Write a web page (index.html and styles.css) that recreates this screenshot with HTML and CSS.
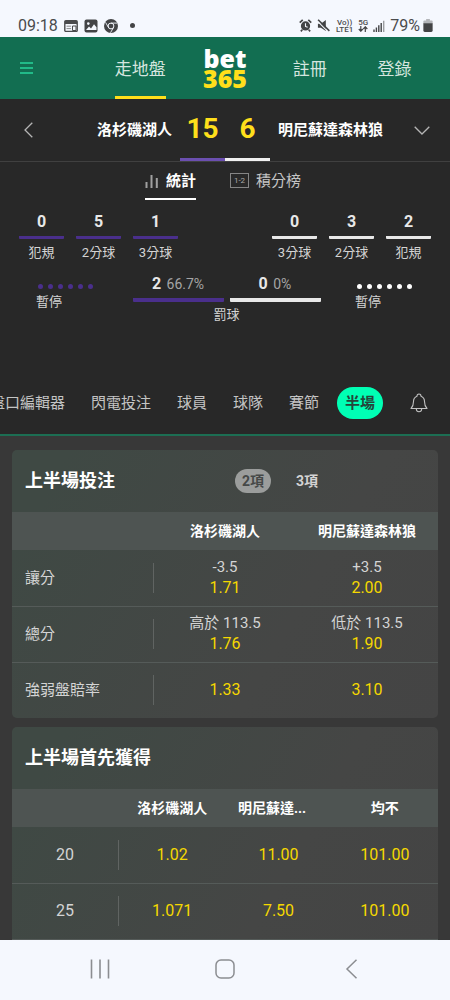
FILE: index.html
```html
<!DOCTYPE html>
<html lang="zh-Hant">
<head>
<meta charset="utf-8">
<meta name="viewport" content="width=device-width, initial-scale=1">
<title>bet365</title>
<link rel="stylesheet" href="styles.css">
</head>
<body>
<div class="screen">
  <div class="status">
    <span class="status-time">09:18</span>
    <svg class="i-news" viewBox="0 0 14 12"><rect x=".8" y=".8" width="12.4" height="10.6" rx="1" fill="none" stroke="#4a4b4d" stroke-width="1.4"/><path d="M1 1h12v3H1z" fill="#4a4b4d"/><path d="M2.500 6.200h4.600M2.500 8.600h4.600" stroke="#8b8c8e" stroke-width="1"/><path d="M8.500 6h3.500v4.500H8.500z" fill="none" stroke="#4a4b4d"/></svg>
    <svg class="i-pic" viewBox="0 0 14 14"><rect x=".5" y=".5" width="13" height="13" rx="2" fill="#434446"/><circle cx="4.300" cy="4.600" r="1.300" fill="#f5f8fe"/><path d="M2 11l3-3.600 2 2 3-4.200 2.500 3V11z" fill="#f5f8fe"/></svg>
    <svg class="i-pic" viewBox="0 0 14 14"><circle cx="7" cy="7" r="7" fill="#434446"/><circle cx="7" cy="7" r="2.900" fill="#434446" stroke="#f5f8fe" stroke-width="1"/><path d="M7 4.100h6.200M4.500 8.500L1.500 3.300M9.500 8.500L6.500 13.700" stroke="#f5f8fe" stroke-width=".9"/></svg>
    <span class="status-dot"></span>
    <div class="status-right">
      <svg class="i-alarm" viewBox="0 0 14 14"><circle cx="7" cy="7.500" r="5" fill="#434446"/><path d="M.8 4L4 1M13.200 4L10 1M3.500 11.500L2 13.300M10.500 11.500L12 13.300" stroke="#434446" stroke-width="1.800"/><path d="M7 4.500V8l2.300 1" fill="none" stroke="#f5f8fe" stroke-width="1.200"/></svg>
      <svg class="i-mute" viewBox="0 0 14 14"><path d="M1 5h3.200L9.500 1v12L4.200 9.500H1z" fill="#434446"/><path d="M0 1.800L12 13.800" stroke="#f5f8fe" stroke-width="1.200"/><path d="M1.200 .8L13.300 12.800" stroke="#434446" stroke-width="1.700"/></svg>
      <span class="net"><span>Vo))</span><span>LTE1</span></span>
      <span class="net"><span>5G</span><svg viewBox="0 0 10 6"><path d="M2.800 0v5M.8 3l2 2.200L4.800 3M7.300 6V1M5.300 3l2-2.200L9.300 3" fill="none" stroke="#434446" stroke-width="1.200"/></svg></span>
      <svg class="i-signal" viewBox="0 0 12 12"><path d="M1 12V9.500M3.400 12V7.500M5.800 12V5.300M8.200 12V3" stroke="#434446" stroke-width="1.400"/><path d="M10.700 12V.8" stroke="#9b9da1" stroke-width="1.400"/></svg>
      <span class="battery-text">79%</span>
      <svg class="i-batt" viewBox="0 0 10 14"><path d="M3 0h4v1.500h2q1 0 1 1V5H0V2.500q0-1 1-1h2z" fill="#b4b6ba"/><path d="M0 4.500h10V12.500q0 1.500-1.500 1.500h-7Q0 14 0 12.500z" fill="#434446"/></svg>
    </div>
  </div>

  <header class="topbar">
    <button class="menu" aria-label="選單"><svg viewBox="0 0 14 14"><path d="M0 2h13M0 7h13M0 12h13" stroke="#27d49a" stroke-width="1.600"/></svg></button>
    <a class="top-link active" href="#">走地盤</a>
    <a class="logo" href="#"><span>bet</span><span class="logo-num">365</span></a>
    <a class="top-link" href="#">註冊</a>
    <a class="top-link" href="#">登錄</a>
  </header>

  <section class="scorebar">
    <div class="side">
      <button aria-label="返回"><svg class="i-back" viewBox="0 0 9 16"><path d="M8.300 .7L1 8l7.300 7.300" fill="none" stroke="#b5b5b5" stroke-width="1.300"/></svg></button>
      <span class="team">洛杉磯湖人</span>
    </div>
    <span class="score home">15</span>
    <span class="score away">6</span>
    <div class="side">
      <span class="team">明尼蘇達森林狼</span>
      <button aria-label="展開"><svg class="i-down" viewBox="0 0 16 9"><path d="M.7 .7L8 8l7.300-7.300" fill="none" stroke="#b5b5b5" stroke-width="1.300"/></svg></button>
    </div>
  </section>

  <nav class="views">
    <button class="view active"><svg class="i-bars" viewBox="0 0 14 14"><path d="M1.500 14V8M6.500 14V1M11.800 14V4" stroke="#a0a0a0" stroke-width="2"/></svg>統計</button>
    <button class="view"><span class="i-12">1-2</span>積分榜</button>
  </nav>

  <section class="stats">
    <div class="stat-row">
      <div class="group">
        <div class="stat home"><b>0</b><span>犯規</span></div>
        <div class="stat home"><b>5</b><span>2分球</span></div>
        <div class="stat home"><b>1</b><span>3分球</span></div>
      </div>
      <div class="group">
        <div class="stat away"><b>0</b><span>3分球</span></div>
        <div class="stat away"><b>3</b><span>2分球</span></div>
        <div class="stat away"><b>2</b><span>犯規</span></div>
      </div>
    </div>
    <div class="shots">
      <div class="timeouts home"><div class="dots"><i></i><i></i><i></i><i></i><i></i><i></i></div>暫停</div>
      <div class="free">
        <div class="free-pair">
          <div class="home"><b>2</b> 66.7%</div>
          <div class="away"><b>0</b> 0%</div>
        </div>
        <span>罰球</span>
      </div>
      <div class="timeouts away"><div class="dots"><i></i><i></i><i></i><i></i><i></i><i></i></div>暫停</div>
    </div>
  </section>

  <nav class="markets">
    <div class="market-list">
      <a href="#">盤口編輯器</a><a href="#">閃電投注</a><a href="#">球員</a><a href="#">球隊</a><a href="#">賽節</a><a class="active" href="#">半場</a>
    </div>
    <button class="bell" aria-label="通知"><svg viewBox="0 0 18 20"><path d="M1 15.500Q3.500 13 3.500 8.500Q3.500 4.500 7 3.200Q7 1 9 1T11 3.200Q14.500 4.500 14.500 8.500Q14.500 13 17 15.500Z" fill="none" stroke="#c2c2c2" stroke-width="1.100" stroke-linejoin="round"/><path d="M6.300 16Q6.500 18.800 9 18.800T11.700 16" fill="none" stroke="#c2c2c2" stroke-width="1.100"/></svg></button>
  </nav>

  <main class="content">
    <section class="card">
      <div class="card-head">
        <h2>上半場投注</h2>
        <div class="ways"><button class="active">2項</button><button>3項</button></div>
      </div>
      <table class="two">
        <thead><tr><th></th><th>洛杉磯湖人</th><th>明尼蘇達森林狼</th></tr></thead>
        <tbody>
          <tr><th><span>讓分</span></th><td>-3.5<b>1.71</b></td><td>+3.5<b>2.00</b></td></tr>
          <tr><th><span>總分</span></th><td>高於 113.5<b>1.76</b></td><td>低於 113.5<b>1.90</b></td></tr>
          <tr><th><span>強弱盤賠率</span></th><td><b>1.33</b></td><td><b>3.10</b></td></tr>
        </tbody>
      </table>
    </section>
    <section class="card">
      <div class="card-head"><h2>上半場首先獲得</h2></div>
      <table class="three">
        <thead><tr><th></th><th>洛杉磯湖人</th><th class="cut">明尼蘇達...</th><th>均不</th></tr></thead>
        <tbody>
          <tr><th><span>20</span></th><td><b>1.02</b></td><td><b>11.00</b></td><td><b>101.00</b></td></tr>
          <tr><th><span>25</span></th><td><b>1.071</b></td><td><b>7.50</b></td><td><b>101.00</b></td></tr>
        </tbody>
      </table>
    </section>
  </main>

  <nav class="sysnav">
    <button aria-label="最近"><svg viewBox="0 0 20 20"><path d="M1.500 .5v19M10 .5v19M18.500 .5v19" stroke="#8b8d91" stroke-width="1.600"/></svg></button>
    <button aria-label="主頁"><svg viewBox="0 0 20 20"><rect x="1" y="1" width="18" height="18" rx="5" fill="none" stroke="#8b8d91" stroke-width="1.500"/></svg></button>
    <button aria-label="返回"><svg viewBox="0 0 20 20"><path d="M16.500 .7L7 10l9.500 9.300" fill="none" stroke="#8b8d91" stroke-width="1.500"/></svg></button>
  </nav>
</div>
</body>
</html>
```
FILE: styles.css
```css
* { box-sizing: border-box; }
body {
  margin: 0;
  background: #383838;
  color: #d4d4d4;
  font-family: Roboto, "Noto Sans CJK TC", sans-serif;
  font-size: 15px;
  line-height: 20px;
}
button {
  display: flex;
  align-items: center;
  padding: 0;
  border: 0;
  background: none;
  color: inherit;
  font: inherit;
}
a { color: inherit; text-decoration: none; }
svg { display: block; flex: none; }
.screen { display: flex; flex-direction: column; height: 100vh; overflow: hidden; }
.screen > * { flex: none; }

.status {
  display: flex;
  align-items: center;
  gap: 6px;
  height: 37px;
  padding: 14px 17px 0 18px;
  background: #f5f8fe;
  color: #4a4b4d;
}
.status-time { font-size: 16px; }
.i-news { width: 14px; height: 12px; }
.i-pic { width: 14px; height: 14px; }
.status-dot { width: 5px; height: 5px; margin-left: 6px; border-radius: 50%; background: #434446; }
.status-right { display: flex; align-items: center; gap: 5px; margin-left: auto; }
.i-alarm, .i-mute { width: 13px; height: 13px; }
.i-mute { margin-right: 1px; }
.net { display: flex; flex-direction: column; align-items: center; font-size: 8px; font-weight: 500; line-height: 7px; }
.net svg { width: 10px; height: 6px; }
.i-signal { width: 12px; height: 12px; }
.battery-text { font-size: 16px; }
.i-batt { width: 10px; height: 13px; margin-left: -2px; }

.topbar {
  display: grid;
  grid-template-columns: 1fr 1fr 1fr 1fr 1fr;
  height: 62px;
  padding: 0 13px;
  background: #126e51;
  color: #d5e5df;
  font-size: 17px;
}
.topbar > * { justify-self: center; display: flex; align-items: center; }
.topbar .menu { justify-self: start; padding-left: 7px; }
.menu svg { width: 14px; height: 14px; }
.top-link { border-bottom: 3px solid transparent; border-top: 4px solid transparent; }
.top-link.active { border-bottom-color: #ffdf1b; }
.topbar .logo {
  flex-direction: column;
  justify-content: center;
  color: #fff;
  font: 800 25px/20px "Open Sans", sans-serif;
}
.logo-num { color: #ffdf1b; }

.scorebar {
  display: grid;
  grid-template-columns: 1fr 45px 45px 1fr;
  height: 63px;
  border-bottom: 1px solid #404040;
  background: #282828;
  color: #fff;
}
.side { display: flex; align-items: center; justify-content: space-between; padding: 0 8px 0 24px; }
.side:last-child { padding: 0 20px 0 8px; }
.team { font-weight: 700; }
.i-back { width: 9px; height: 16px; }
.i-down { width: 16px; height: 9px; }
.score {
  display: flex;
  align-items: center;
  justify-content: center;
  border-bottom: 3px solid;
  color: #ffdf1b;
  font-size: 28px;
  font-weight: 700;
}
.score.home { border-bottom-color: #6b4fb0; }
.score.away { border-bottom-color: #f0f0f0; }

.views { display: flex; justify-content: center; gap: 34px; padding: 7px 4px 0 0; background: #282828; color: #c4c4c4; }
.view { gap: 7px; height: 31px; padding-bottom: 6px; border-bottom: 2px solid transparent; }
.view.active { border-bottom-color: #fff; color: #fff; font-weight: 700; }
.i-bars { width: 14px; height: 14px; }
.i-12 { width: 19px; height: 15px; border: 1px solid #858585; color: #aaa; font-size: 8px; line-height: 13px; text-align: center; }

.stats { height: 171px; padding: 12px 19px 0; background: #282828; font-size: 13px; }
.stat-row, .group, .shots, .free-pair { display: flex; }
.stat-row { justify-content: space-between; }
.group { gap: 12px; }
.stat { display: flex; flex-direction: column; align-items: center; width: 45px; white-space: nowrap; }
.stat b, .free b { color: #e8e8e8; font-size: 16px; }
.stat b { width: 100%; padding-bottom: 4px; border-bottom: 3px solid #4a2f8c; border-radius: 1px; text-align: center; }
.stat span { padding-top: 4px; }
.stat.away b { border-bottom-color: #e8e8e8; }
.shots { justify-content: space-between; padding: 11px 14px 0 17px; }
.timeouts { width: 62px; padding-top: 10px; line-height: 26px; }
.dots { display: flex; gap: 5px; padding-left: 2px; }
.dots i { width: 5px; height: 5px; border-radius: 50%; background: #4a2f8c; }
.away .dots i { background: #fff; }
.free { flex: none; text-align: center; }
.free-pair { gap: 6px; color: #a5a5a5; font-size: 14px; }
.free-pair > div { width: 91px; padding-bottom: 4px; border-bottom: 4px solid #4a2f8c; border-radius: 1px; }
.free-pair b { margin-right: 2px; }
.free-pair .away { border-bottom-color: #e8e8e8; }
.free > span { display: block; padding-top: 3px; }

.markets { display: flex; height: 65px; border-bottom: 2px solid #1c6e53; background: #282828; }
.market-list { display: flex; flex: 1; align-items: center; justify-content: flex-end; gap: 26px; min-width: 0; overflow: hidden; color: #c4c4c4; white-space: nowrap; }
.market-list a { flex: none; }
.market-list .active { margin-left: -8px; padding: 6px 8px; border-radius: 16px; background: #00ffb4; color: #24463b; font-weight: 700; }
.bell { justify-content: center; width: 67px; padding-left: 5px; }
.bell svg { width: 18px; height: 20px; }

.screen > .content { display: flex; flex: 1; flex-direction: column; gap: 9px; min-height: 0; padding: 14px 12px 0; overflow: hidden; }
.card { flex: none; overflow: hidden; border-radius: 5px; background: linear-gradient(120deg, #3f4944 10%, #454645 65%, #444); }
.card:last-child { flex: 1 0 auto; border-radius: 5px 5px 0 0; }
.card-head { display: flex; align-items: center; height: 62px; padding: 0 13px; }
h2 { flex: 1; margin: 0; color: #fff; font-size: 18px; }
.ways { display: flex; flex: 1; gap: 18px; margin-left: 20px; font-size: 14px; font-weight: 700; }
.ways button { padding: 2px 7px; border-radius: 13px; }
.ways .active { background: #9b9d9c; color: #454847; }
table { width: 100%; border-collapse: collapse; table-layout: fixed; text-align: center; }
thead tr { height: 38px; background: #4e5452; color: #fff; font-size: 14px; }
thead th { padding: 0; white-space: nowrap; }
thead .cut { padding-right: 13px; }
tbody tr { height: 56px; border-bottom: 1px solid #555b59; }
.two tbody tr:last-child { border-bottom: 0; }
tbody th { padding: 0; font-weight: 400; }
tbody th span { display: flex; align-items: center; height: 30px; border-right: 1px solid #606462; }
.two tbody th span { padding-left: 13px; }
.two th:first-child { width: 142px; }
.three th:first-child { width: 107px; }
.three tbody th span { justify-content: center; font-size: 16px; }
td { padding: 0; }
td b { display: block; color: #f5d800; font-size: 16px; font-weight: 400; line-height: 22px; }

.sysnav { display: flex; align-items: center; justify-content: space-around; height: 60px; padding: 0 37px 3px; background: #f5f8fe; }
.sysnav svg { width: 20px; height: 20px; }
```
